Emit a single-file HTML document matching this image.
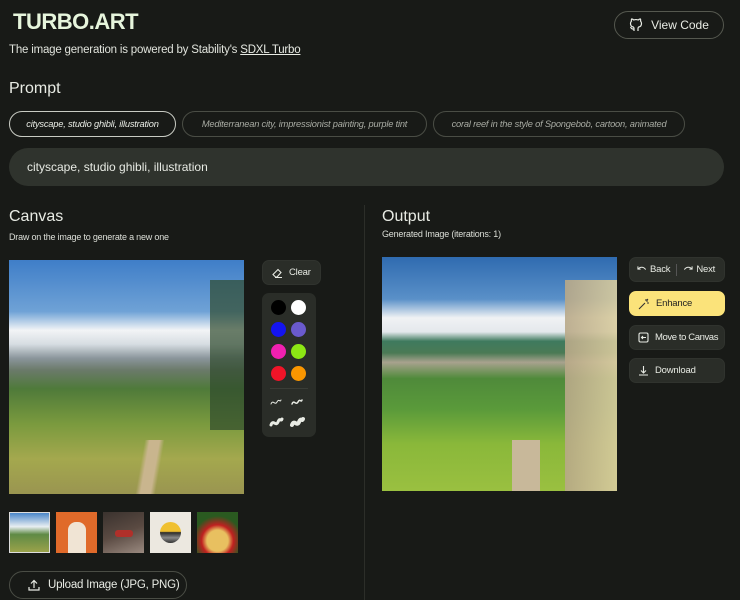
<!DOCTYPE html>
<html><head><style>
*{margin:0;padding:0;box-sizing:border-box}
body{width:740px;height:600px;background:#181a17;color:#e8ebe4;font-family:"Liberation Sans",sans-serif;position:relative;overflow:hidden;white-space:nowrap}
.a{position:absolute}
.logo{left:13px;top:9px;font-size:22px;font-weight:bold;color:#e6f5dc;letter-spacing:-0.5px}
.sub{left:9px;top:44px;font-size:11.5px;color:#e0e3dc;letter-spacing:-0.2px}
.sub u{color:#e8ebe4}
.vc{left:614px;top:11px;width:110px;height:28px;border:1px solid #55584f;border-radius:14px;font-size:12px;display:flex;align-items:center;justify-content:center;gap:8px}
h2{font-weight:normal;font-size:16px;position:absolute;color:#e8ebe4}
.chip{top:111px;height:26px;border:1px solid #4a4d45;border-radius:13px;font-size:9.3px;font-style:italic;color:#a8aba3;display:flex;align-items:center;justify-content:center;letter-spacing:-0.2px}
.inp{left:9px;top:148px;width:715px;height:38px;background:#2f332d;border-radius:19px;font-size:12px;padding:12px 18px}
.small{font-size:9px;color:#dcdfd8;letter-spacing:-0.2px}
.btn{background:#2a2d28;border-radius:7px;font-size:9.5px;display:flex;align-items:center;gap:6px;padding-left:8px;border:1px solid #30332e;letter-spacing:-0.2px}
.dot{position:absolute;width:15px;height:15px;border-radius:50%}
.th{position:absolute;top:512px;width:41px;height:41px}
</style></head><body>
<div class="a logo">TURBO.ART</div>
<div class="a sub">The image generation is powered by Stability's <u>SDXL Turbo</u></div>
<div class="a vc"><svg width="14" height="14" viewBox="0 0 14 14" fill="none" stroke="#e8ebe4" stroke-width="1.2"><path d="M5 13v-2c-2 .5-3-1-3.5-2M9 13v-2.5c0-.8.3-1.2.7-1.5C11.5 8.7 12.5 7.5 12.5 5.5c0-1-.4-1.8-1-2.5.2-.6.2-1.4-.1-2-1 0-1.8.6-2.2 1a6 6 0 0 0-4.4 0C4.4 1.6 3.6 1 2.6 1c-.3.6-.3 1.4-.1 2-.6.7-1 1.5-1 2.5 0 2 1 3.2 2.8 3.5.4.3.7.7.7 1.5"/></svg>View Code</div>
<h2 style="left:9px;top:80px">Prompt</h2>
<div class="a chip" style="left:9px;width:167px;border-color:#c8cbc3;color:#e8ebe4">cityscape, studio ghibli, illustration</div>
<div class="a chip" style="left:182px;width:245px">Mediterranean city, impressionist painting, purple tint</div>
<div class="a chip" style="left:433px;width:252px">coral reef in the style of Spongebob, cartoon, animated</div>
<div class="a inp">cityscape, studio ghibli, illustration</div>
<h2 style="left:9px;top:208px">Canvas</h2>
<div class="a small" style="left:9px;top:232px">Draw on the image to generate a new one</div>
<h2 style="left:382px;top:208px">Output</h2>
<div class="a small" style="left:382px;top:229px">Generated Image (iterations: 1)</div>
<div class="a" style="left:364px;top:205px;width:1px;height:395px;background:#2c2e29"></div>

<div class="a" style="left:9px;top:260px;width:235px;height:234px;background:linear-gradient(180deg,#3f7ec8 0%,#6fa2d6 22%,#f2f4f6 30%,#d6dde2 36%,#8a959b 42%,#6b7a6a 47%,#4f7a3a 55%,#7a9a3e 70%,#a4a84e 85%,#9a9550 100%)"></div>
<div class="a" style="left:130px;top:440px;width:40px;height:54px;background:linear-gradient(100deg,transparent 30%,#c9b58e 40%,#c9b58e 60%,transparent 70%)"></div>
<div class="a" style="left:210px;top:280px;width:34px;height:150px;background:#2f4a2c;opacity:.7"></div>

<div class="a btn" style="left:262px;top:260px;width:59px;height:25px">
<svg width="12" height="12" viewBox="0 0 12 12" fill="none" stroke="#e8ebe4" stroke-width="1.1"><path d="M4 10.5h7M2 7.5l5-5 3 3-4 4.5H4.5z"/></svg>Clear</div>
<div class="a" style="left:262px;top:293px;width:54px;height:144px;background:#2a2d28;border-radius:7px"></div>
<div class="dot" style="left:271px;top:300px;background:#000"></div>
<div class="dot" style="left:291px;top:300px;background:#fff"></div>
<div class="dot" style="left:271px;top:322px;background:#1414f0"></div>
<div class="dot" style="left:291px;top:322px;background:#6a5acd"></div>
<div class="dot" style="left:271px;top:344px;background:#f020b0"></div>
<div class="dot" style="left:291px;top:344px;background:#8ce614"></div>
<div class="dot" style="left:271px;top:366px;background:#f01428"></div>
<div class="dot" style="left:291px;top:366px;background:#fa9600"></div>
<div class="a" style="left:270px;top:388px;width:38px;height:1px;background:#3a3d37"></div>
<svg class="a" style="left:268px;top:393px" width="44" height="40" viewBox="0 0 44 40" fill="none" stroke="#e8ebe4" stroke-linecap="round"><path stroke-width="1" d="M3 11c2-5 4 2 6-2s3 1 4-2"/><path stroke-width="1.5" d="M24 11c2-5 4 2 6-2s3 1 4-2"/><path stroke-width="3" d="M3 32c2-6 5 2 7-3s3 0 4-3"/><path stroke-width="4" d="M24 32c2-6 5 2 7-3s3 0 4-3"/></svg>

<div class="th" style="left:9px;background:linear-gradient(180deg,#4a86c8,#e8eef2 35%,#5f8a45 55%,#9aa24a);border:1px solid #ddd"></div>
<div class="th" style="left:56px;background:#e06a2a"><div style="position:absolute;left:12px;top:10px;width:18px;height:31px;background:#f0e4d4;border-radius:8px 8px 0 0"></div></div>
<div class="th" style="left:103px;background:linear-gradient(160deg,#3a322e,#5a4a42 50%,#9a8a80)"><div style="position:absolute;left:12px;top:18px;width:18px;height:7px;background:#b0302a;border-radius:3px"></div></div>
<div class="th" style="left:150px;background:#ece8e0"><div style="position:absolute;left:10px;top:10px;width:21px;height:21px;border-radius:50%;background:linear-gradient(#f0c030 45%,#2a2a2a 50%,#888 75%,#333)"></div></div>
<div class="th" style="left:197px;background:radial-gradient(circle at 50% 70%,#e8c060 30%,#c02020 45%,#2a5a20 70%)"></div>

<div class="a" style="left:9px;top:571px;width:178px;height:28px;border:1px solid #4a4d45;border-radius:14px;font-size:11.5px;display:flex;align-items:center;padding-left:18px;gap:8px;letter-spacing:-0.2px">
<svg width="12" height="12" viewBox="0 0 12 12" fill="none" stroke="#e8ebe4" stroke-width="1.2"><path d="M1 8v3h10V8M6 9V1.5M3 4.5l3-3 3 3"/></svg>Upload Image (JPG, PNG)</div>

<div class="a" style="left:382px;top:257px;width:235px;height:234px;background:linear-gradient(180deg,#2f6bb0 0%,#5a90c8 18%,#f0f2f4 26%,#e4e8ec 32%,#3f7a5e 36%,#4a7a55 41%,#a8a28e 45%,#4f8a3a 52%,#5a9a3a 65%,#8ab83a 80%,#9ac040 100%)"></div>
<div class="a" style="left:565px;top:280px;width:52px;height:211px;background:linear-gradient(90deg,#b8a888,#d8cc9e);opacity:.9"></div>
<div class="a" style="left:512px;top:440px;width:28px;height:51px;background:#c8b89a"></div>

<div class="a btn" style="left:629px;top:257px;width:96px;height:25px;gap:3px;padding-left:7px">
<svg width="10" height="10" viewBox="0 0 11 10" fill="none" stroke="#e8ebe4" stroke-width="1.1"><path d="M1 1v3h3M1.5 4C3 1.5 7 1 9.5 4.5"/></svg>Back<span style="width:1px;height:12px;background:#555;margin:0 3px"></span><svg width="10" height="10" viewBox="0 0 11 10" fill="none" stroke="#e8ebe4" stroke-width="1.1"><path d="M10 1v3H7M9.5 4C8 1.5 4 1 1.5 4.5"/></svg>Next</div>
<div class="a btn" style="left:629px;top:291px;width:96px;height:25px;background:#fbe37a;color:#222;border-color:#fbe37a">
<svg width="12" height="12" viewBox="0 0 12 12" fill="none" stroke="#333" stroke-width="1.1"><path d="M1 11l6-6M8 1v2M10 3H8M11 5H9M9 1l1 1"/></svg>Enhance</div>
<div class="a btn" style="left:629px;top:325px;width:96px;height:25px;letter-spacing:-0.4px">
<svg width="11" height="11" viewBox="0 0 11 11" fill="none" stroke="#e8ebe4" stroke-width="1.1"><rect x="1" y="1" width="9" height="9" rx="1.5"/><path d="M8 5.5H3.5M5 4L3.5 5.5 5 7"/></svg>Move to Canvas</div>
<div class="a btn" style="left:629px;top:358px;width:96px;height:25px">
<svg width="11" height="11" viewBox="0 0 11 11" fill="none" stroke="#e8ebe4" stroke-width="1.1"><path d="M1 10h9M5.5 1v7M3 5.5l2.5 2.5L8 5.5"/></svg>Download</div>
</body></html>
